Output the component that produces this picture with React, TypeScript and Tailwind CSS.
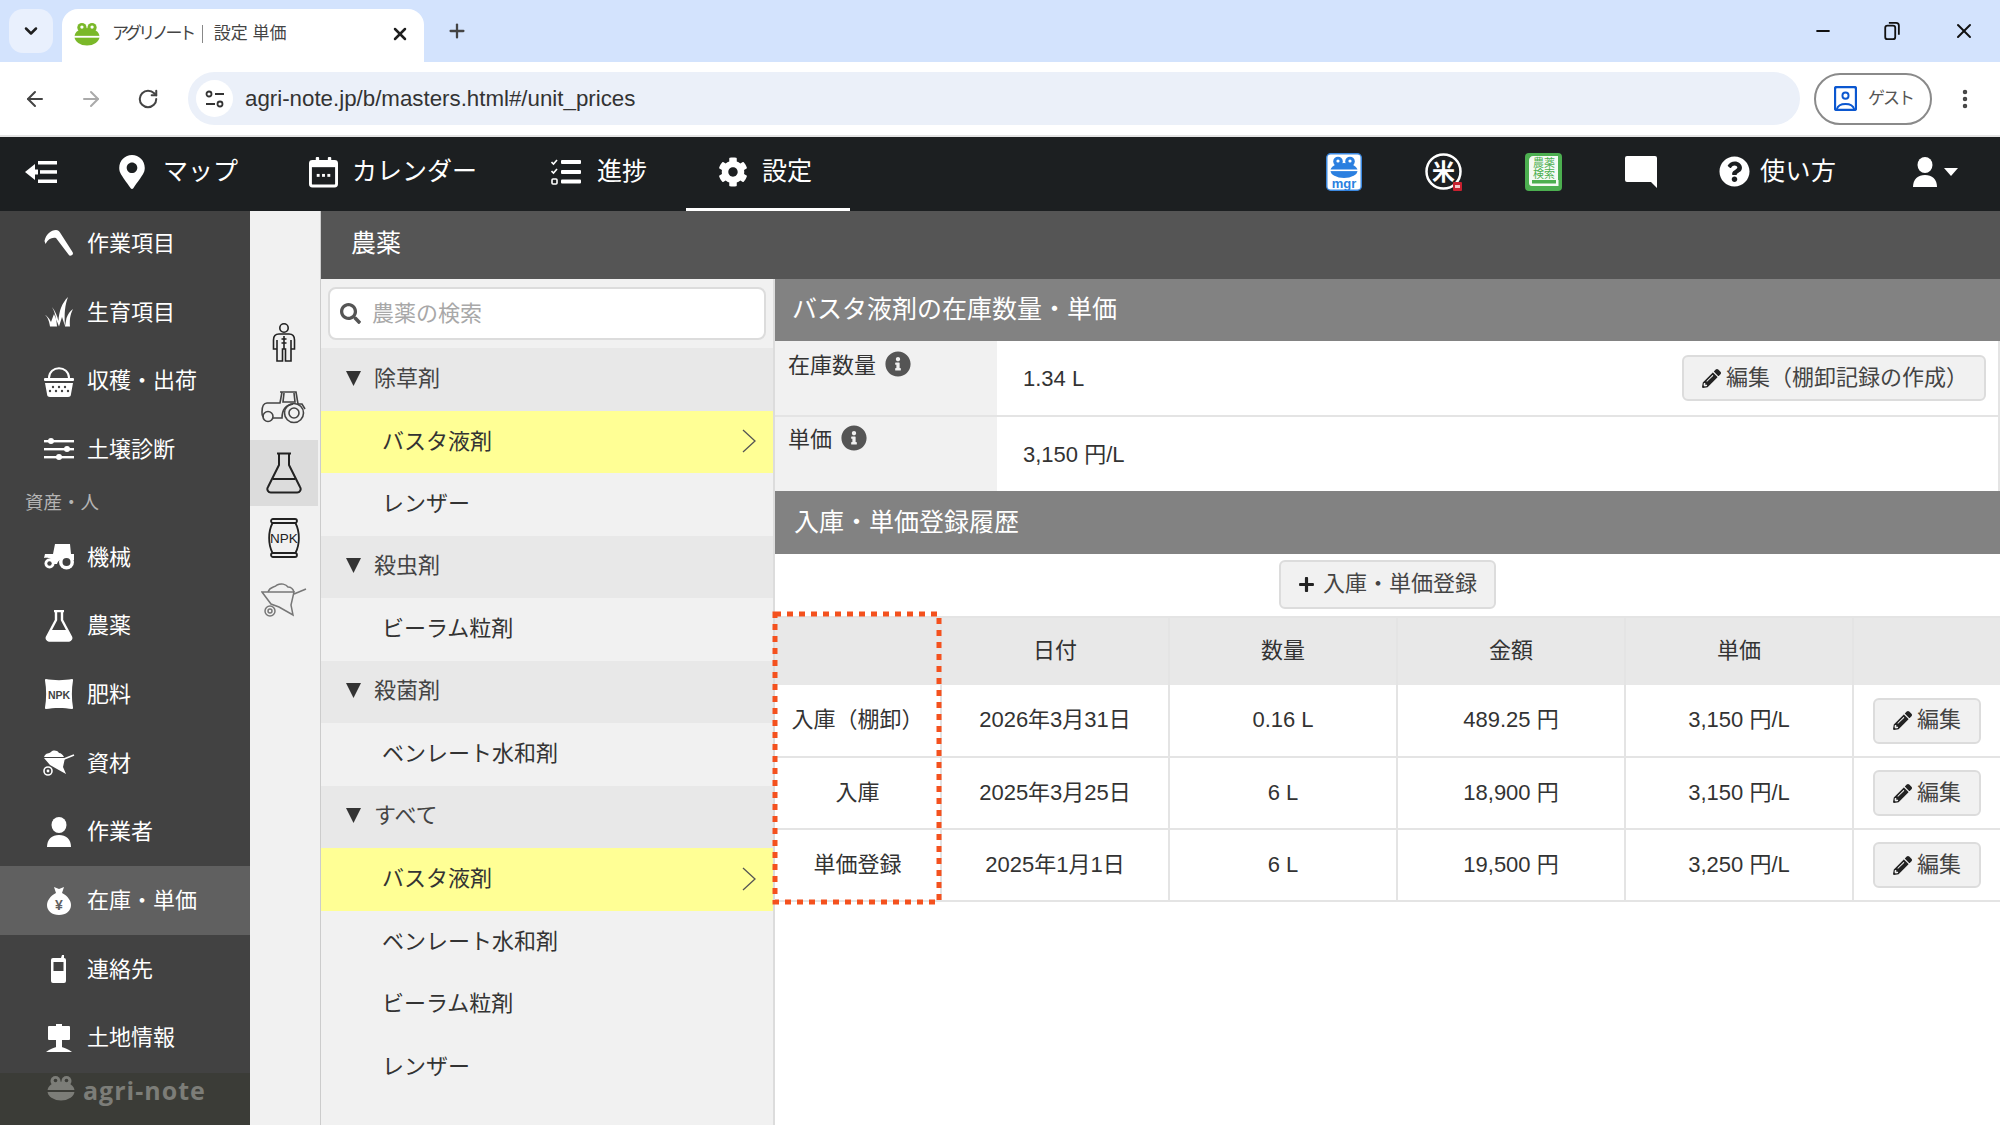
import React from 'react';
import { ArrowLeft, ArrowRight, RotateCw, X, Plus, ChevronDown, Minus, MoreVertical } from 'lucide-react';
import { FaMapMarkerAlt, FaCog, FaQuestionCircle, FaSearch, FaPencilAlt, FaPlus, FaInfoCircle } from 'react-icons/fa';

const FONT = '"Liberation Sans", "Noto Sans CJK JP", sans-serif';

type IconProps = { className?: string };

const Frog: React.FC<IconProps & { fill?: string; band?: string }> = ({ className, fill = '#7ab829', band = '#fff' }) => (
  <svg viewBox="0 0 28 26" className={className}>
    <circle cx="8.5" cy="6" r="5" fill={fill} />
    <circle cx="19.5" cy="6" r="5" fill={fill} />
    <ellipse cx="14" cy="16" rx="13.5" ry="9.5" fill={fill} />
    <rect x="0" y="15" width="28" height="2" fill={band} />
    <circle cx="8.5" cy="5.5" r="1.8" fill={band} />
    <circle cx="19.5" cy="5.5" r="1.8" fill={band} />
  </svg>
);

const CollapseIcon: React.FC<IconProps> = ({ className }) => (
  <svg viewBox="0 0 32 24" className={className} fill="#fff">
    <path d="M0 12 L10 4 V9.500 H13 V14.500 H10 V20 Z" />
    <rect x="13" y="1" width="19" height="3.500" />
    <rect x="15" y="10.200" width="17" height="3.500" />
    <rect x="13" y="19.500" width="19" height="3.500" />
  </svg>
);

const CalendarIcon: React.FC<IconProps> = ({ className }) => (
  <svg viewBox="0 0 30 32" className={className}>
    <rect x="1.5" y="5" width="27" height="25.5" rx="2" fill="none" stroke="#fff" strokeWidth="3" />
    <rect x="1.5" y="5" width="27" height="6" fill="#fff" />
    <rect x="7" y="0.5" width="3.5" height="7" rx="1" fill="#fff" />
    <rect x="19.5" y="0.5" width="3.5" height="7" rx="1" fill="#fff" />
    <rect x="8" y="18" width="3" height="3" fill="#fff" />
    <rect x="13.5" y="18" width="3" height="3" fill="#fff" />
    <rect x="19" y="18" width="3" height="3" fill="#fff" />
  </svg>
);

const TasksIcon: React.FC<IconProps> = ({ className }) => (
  <svg viewBox="0 0 30 26" className={className} fill="#fff">
    <path d="M0.5 3 L2.5 5 L6 1" fill="none" stroke="#fff" strokeWidth="1.6" />
    <path d="M0.5 12 L2.5 14 L6 10" fill="none" stroke="#fff" strokeWidth="1.6" />
    <rect x="1" y="20" width="5" height="5" rx="1" fill="none" stroke="#fff" strokeWidth="1.6" />
    <rect x="10" y="1" width="20" height="4" rx="1" />
    <rect x="10" y="11" width="20" height="4" rx="1" />
    <rect x="10" y="20.5" width="20" height="4" rx="1" />
  </svg>
);

const MgrIcon: React.FC<IconProps> = ({ className }) => (
  <svg viewBox="0 0 36 38" className={className}>
    <rect x="0.75" y="0.75" width="34.500" height="36.500" rx="4" fill="#fff" stroke="#3b88e0" strokeWidth="1.500" />
    <circle cx="12" cy="8.500" r="4.8" fill="#2a7fe0" />
    <circle cx="24" cy="8.500" r="4.8" fill="#2a7fe0" />
    <circle cx="12" cy="8" r="1.6" fill="#fff" />
    <circle cx="24" cy="8" r="1.6" fill="#fff" />
    <ellipse cx="18" cy="17.500" rx="13.500" ry="7.5" fill="#2a7fe0" />
    <rect x="4" y="16.500" width="28" height="1.6" fill="#fff" />
    <text x="18" y="35" textAnchor="middle" fontSize="13" fontWeight="700" fill="#2a7fe0" fontFamily="Liberation Sans">mgr</text>
  </svg>
);

const RiceIcon: React.FC<IconProps> = ({ className }) => (
  <svg viewBox="0 0 38 38" className={className}>
    <circle cx="18.5" cy="18.500" r="17" fill="#1c1f21" stroke="#fff" strokeWidth="2.500" />
    <text x="18.5" y="26.500" textAnchor="middle" fontSize="23" fontWeight="700" fill="#fff" fontFamily="Noto Sans CJK JP">米</text>
    <rect x="28" y="29" width="9" height="9" rx="1" fill="#c8202f" />
    <rect x="30" y="32" width="5" height="3" fill="#f3c4c8" />
  </svg>
);

const BookIcon: React.FC<IconProps> = ({ className }) => (
  <svg viewBox="0 0 37 38" className={className}>
    <rect x="0" y="0" width="37" height="38" rx="4" fill="#4caf50" />
    <path d="M8 3 H33 V27 H33.500 V33 H7 C5 33 4 32 4 30 V7 C4 5 6 3 8 3 Z" fill="#f4faf4" />
    <rect x="7" y="27" width="24" height="3.500" fill="#4caf50" />
    <text x="19" y="14" textAnchor="middle" fontSize="11" fill="#4caf50" fontFamily="Noto Sans CJK JP">農薬</text>
    <text x="19" y="25" textAnchor="middle" fontSize="11" fill="#4caf50" fontFamily="Noto Sans CJK JP">検索</text>
  </svg>
);

const ChatIcon: React.FC<IconProps> = ({ className }) => (
  <svg viewBox="0 0 32 32" className={className}>
    <path d="M2 0 H30 a2 2 0 0 1 2 2 V32 L26 26 H2 a2 2 0 0 1 -2 -2 V2 a2 2 0 0 1 2 -2 Z" fill="#fff" />
  </svg>
);

const PersonIcon: React.FC<IconProps> = ({ className }) => (
  <svg viewBox="0 0 24 30" className={className} fill="#fff">
    <ellipse cx="12" cy="8" rx="7.5" ry="8" />
    <path d="M0 30 C0 22 5 18 12 18 C19 18 24 22 24 30 Z" />
  </svg>
);

const SickleIcon: React.FC<IconProps> = ({ className }) => (
  <svg viewBox="0 0 30 28" className={className} fill="#fff">
    <path d="M0.500 12 C2 5 7 1 12 1 C14 1 15 2 16 3.500 L28.500 23 a2.200 2.200 0 0 1 -4 2.500 L12 9 C8 8 4 10 1.500 15 Z" />
  </svg>
);

const GrassIcon: React.FC<IconProps> = ({ className }) => (
  <svg viewBox="0 0 30 30" className={className} fill="#fff">
    <path d="M0 17 C3 19 5 23 6 29.500 H13 C12.500 22 11 15 8 10 C11 14 13 18 14.500 24 C15 14 18 6 24 0 C21 8 20 16 21 29.500 H26 C25.500 23 26 18 29 12 C26 14 24 17 22.500 21 L21 29 L18 20 L15 29.500 L10 17 L7 25 C5 21 3 19 0 17 Z" />
  </svg>
);

const BasketIcon: React.FC<IconProps> = ({ className }) => (
  <svg viewBox="0 0 30 32" className={className} fill="#fff">
    <path d="M5 13 C5 0 25 0 25 13" fill="none" stroke="#fff" strokeWidth="2" />
    <rect x="0" y="13" width="30" height="3" rx="1" />
    <path d="M1 18 H29 L27 29 a3 3 0 0 1 -3 3 H6 a3 3 0 0 1 -3 -3 Z" />
    <g fill="#424242">
      <circle cx="9" cy="22" r="1.2" /><circle cx="15" cy="22" r="1.2" /><circle cx="21" cy="22" r="1.2" />
      <circle cx="12" cy="26" r="1.2" /><circle cx="18" cy="26" r="1.2" /><circle cx="24" cy="26" r="1.2" /><circle cx="6" cy="26" r="1.2" />
    </g>
  </svg>
);

const SlidersIcon: React.FC<IconProps> = ({ className }) => (
  <svg viewBox="0 0 30 24" className={className} fill="#fff">
    <rect x="0" y="3" width="30" height="2.4" />
    <rect x="0" y="11" width="30" height="2.4" />
    <rect x="0" y="19" width="30" height="2.4" />
    <circle cx="7" cy="4" r="3" />
    <circle cx="23" cy="12" r="3" />
    <circle cx="15" cy="20" r="3" />
  </svg>
);

const TractorSolid: React.FC<IconProps> = ({ className }) => (
  <svg viewBox="0 0 32 26" className={className} fill="#fff">
    <path d="M12 0 H27 L28 10 H31 V16 H23 C19 14 15 16 14 20 H10 C10 16 7 13 1 14 L2 10 H10 Z" />
    <circle cx="6.5" cy="19.5" r="5" fill="#fff" />
    <circle cx="6.5" cy="19.5" r="2.2" fill="#424242" />
    <circle cx="23.5" cy="18" r="7.5" fill="#fff" />
    <circle cx="23.5" cy="18" r="4" fill="#424242" />
  </svg>
);

const FlaskSolid: React.FC<IconProps> = ({ className }) => (
  <svg viewBox="0 0 28 32" className={className}>
    <path d="M9 1 H19 M11 1 V10 L2 27 a2.5 2.5 0 0 0 2 3.5 H24 a2.5 2.5 0 0 0 2 -3.5 L17 10 V1" fill="none" stroke="#fff" strokeWidth="2.4" strokeLinejoin="round" />
    <path d="M6 20 H22 L26 28 a2 2 0 0 1 -2 3 H4 a2 2 0 0 1 -2 -3 Z" fill="#fff" />
  </svg>
);

const BagSolid: React.FC<IconProps> = ({ className }) => (
  <svg viewBox="0 0 28 32" className={className}>
    <path d="M1 1 C8 2.500 20 2.500 27 1 a1 1 0 0 1 1 1.500 C26.500 11 26.500 21 28 29.500 a1 1 0 0 1 -1 1.500 C20 29.500 8 29.500 1 31 a1 1 0 0 1 -1 -1.500 C1.500 21 1.500 11 0 2.500 a1 1 0 0 1 1 -1.500 Z" fill="#fff" />
    <text x="14" y="20.5" textAnchor="middle" fontSize="10.5" fontWeight="700" fill="#424242" fontFamily="Liberation Sans">NPK</text>
  </svg>
);

const BarrowSolid: React.FC<IconProps> = ({ className }) => (
  <svg viewBox="0 0 32 26" className={className} fill="#fff">
    <path d="M1 7 C3 2 6 4 8 2 C10 0 14 0 16 3 C18 3 20 5 21 7 Z" />
    <path d="M1 8 H22 L20 17 L23 24 L14 19 L7 15 Z" />
    <path d="M21 9 L31 5" stroke="#fff" strokeWidth="1.6" />
    <circle cx="5" cy="21" r="4" fill="none" stroke="#fff" strokeWidth="1.6" />
    <circle cx="5" cy="21" r="1.4" />
  </svg>
);

const MoneyBag: React.FC<IconProps> = ({ className }) => (
  <svg viewBox="0 0 24 28" className={className}>
    <path d="M7 0 L12 2 L17 0 L15 6 C21 9 24 14 24 18 C24 24 19 28 12 28 C5 28 0 24 0 18 C0 14 3 9 9 6 Z" fill="#fff" />
    <text x="12" y="23" textAnchor="middle" fontSize="14" fontWeight="700" fill="#606060" fontFamily="Liberation Sans">¥</text>
  </svg>
);

const PhoneIcon: React.FC<IconProps> = ({ className }) => (
  <svg viewBox="0 0 15 28" className={className}>
    <path d="M2 3 H10 L11 0 H13 V3 a2 2 0 0 1 2 2 V26 a2 2 0 0 1 -2 2 H2 a2 2 0 0 1 -2 -2 V5 a2 2 0 0 1 2 -2 Z" fill="#fff" />
    <rect x="2.5" y="7" width="10" height="9" fill="#424242" />
  </svg>
);

const SignIcon: React.FC<IconProps> = ({ className }) => (
  <svg viewBox="0 0 26 28" className={className} fill="#fff">
    <rect x="2" y="2" width="22" height="14" rx="1" />
    <rect x="10" y="0" width="6" height="24" />
    <path d="M0 28 C4 25 8 23 13 23 C18 23 22 25 26 28 Z" />
  </svg>
);

const PersonOutline: React.FC<IconProps> = ({ className }) => (
  <svg viewBox="0 0 24 40" className={className} fill="none" stroke="#222" strokeWidth="1.6">
    <circle cx="12" cy="5" r="4.2" />
    <path d="M7 11 H17 C20 11 22.500 13 22.500 17 V26 H19 V17 V38 H13.500 V26 H10.500 V38 H5 V17 V26 H1.500 V17 C1.500 13 4 11 7 11 Z" />
    <path d="M12 13 V26 M9.500 16 H14.500 M9.500 20 H14.500" />
  </svg>
);

const TractorOutline: React.FC<IconProps> = ({ className }) => (
  <svg viewBox="0 0 46 34" className={className} fill="none" stroke="#444" strokeWidth="1.6">
    <path d="M19 2 H35 L37 14 H41 L44 19" />
    <path d="M21 2 L19 13 H6 C3 13 1 16 1 22 C1 26 2 27 3 27" />
    <path d="M12 28 H21 C21 20 25 15 32 14" />
    <path d="M23 3 L22 12 H34 L33 3" />
    <circle cx="7" cy="26.500" r="5" />
    <circle cx="33" cy="23" r="9.500" />
    <circle cx="33" cy="23" r="5" />
  </svg>
);

const FlaskOutline: React.FC<IconProps> = ({ className }) => (
  <svg viewBox="0 0 36 42" className={className} fill="none" stroke="#222" strokeWidth="2">
    <path d="M11 1.500 H25 M13 2 V13 L2 35 a3.500 3.500 0 0 0 3 5.500 H31 a3.500 3.500 0 0 0 3 -5.500 L23 13 V2" strokeLinejoin="round" />
    <path d="M7 27 H29" />
  </svg>
);

const BagOutline: React.FC<IconProps> = ({ className }) => (
  <svg viewBox="0 0 34 40" className={className} fill="none" stroke="#222" strokeWidth="1.8">
    <rect x="4" y="1" width="26" height="4" rx="2" />
    <rect x="4" y="35" width="26" height="4" rx="2" />
    <path d="M5.500 5 C1 14 1 26 5.500 35 M28.500 5 C33 14 33 26 28.500 35" />
    <text x="17" y="25" textAnchor="middle" fontSize="13.500" fill="#222" stroke="none" fontFamily="Liberation Sans">NPK</text>
  </svg>
);

const BarrowOutline: React.FC<IconProps> = ({ className }) => (
  <svg viewBox="0 0 46 34" className={className} fill="none" stroke="#777" strokeWidth="1.5">
    <path d="M1 9 H33 L30 22 L32 32 L18 24 L10 21 Z" />
    <path d="M7 9 C9 3 13 5 16 2 C20 0 25 1 27 4 C30 4 32 6 33 9" />
    <path d="M33 11 L45 6" />
    <circle cx="9" cy="28" r="5" />
    <circle cx="9" cy="28" r="2" />
  </svg>
);

const sideItems: { label: string; icon: React.ReactNode; active?: boolean }[] = [
  { label: '作業項目', icon: <SickleIcon className="w-[30px] h-[28px]" /> },
  { label: '生育項目', icon: <GrassIcon className="w-[30px] h-[30px]" /> },
  { label: '収穫・出荷', icon: <BasketIcon className="w-[30px] h-[32px]" /> },
  { label: '土壌診断', icon: <SlidersIcon className="w-[30px] h-[24px]" /> },
];

const sideItems2: { label: string; icon: React.ReactNode; active?: boolean }[] = [
  { label: '機械', icon: <TractorSolid className="w-[32px] h-[26px]" /> },
  { label: '農薬', icon: <FlaskSolid className="w-[28px] h-[32px]" /> },
  { label: '肥料', icon: <BagSolid className="w-[28px] h-[32px]" /> },
  { label: '資材', icon: <BarrowSolid className="w-[32px] h-[26px]" /> },
  { label: '作業者', icon: <PersonIcon className="w-[24px] h-[30px]" /> },
  { label: '在庫・単価', icon: <MoneyBag className="w-[24px] h-[28px]" />, active: true },
  { label: '連絡先', icon: <PhoneIcon className="w-[15px] h-[28px]" /> },
  { label: '土地情報', icon: <SignIcon className="w-[26px] h-[28px]" /> },
];

const SideRow: React.FC<{ label: string; icon: React.ReactNode; active?: boolean }> = ({ label, icon, active }) => (
  <div className={`h-[68.7px] flex items-center text-white text-[22px] ${active ? 'bg-[#606060]' : ''}`}>
    <div className="w-[87px] pl-[30px] flex justify-center shrink-0">{icon}</div>
    <span>{label}</span>
  </div>
);

type ListRow = { label: string; kind: 'group' | 'item' | 'selected' };

const listRows: ListRow[] = [
  { label: '除草剤', kind: 'group' },
  { label: 'バスタ液剤', kind: 'selected' },
  { label: 'レンザー', kind: 'item' },
  { label: '殺虫剤', kind: 'group' },
  { label: 'ビーラム粒剤', kind: 'item' },
  { label: '殺菌剤', kind: 'group' },
  { label: 'ベンレート水和剤', kind: 'item' },
  { label: 'すべて', kind: 'group' },
  { label: 'バスタ液剤', kind: 'selected' },
  { label: 'ベンレート水和剤', kind: 'item' },
  { label: 'ビーラム粒剤', kind: 'item' },
  { label: 'レンザー', kind: 'item' },
];

const tableRows = [
  { type: '入庫（棚卸）', date: '2026年3月31日', qty: '0.16 L', amount: '489.25 円', price: '3,150 円/L' },
  { type: '入庫', date: '2025年3月25日', qty: '6 L', amount: '18,900 円', price: '3,150 円/L' },
  { type: '単価登録', date: '2025年1月1日', qty: '6 L', amount: '19,500 円', price: '3,250 円/L' },
];

const EditButton: React.FC<{ label: string; className: string }> = ({ label, className }) => (
  <button className={`flex items-center bg-[#f1f1f1] border-2 border-[#dcdcdc] rounded-[6px] text-[#444] text-[22px] ${className}`}>
    <FaPencilAlt className="w-[19px] h-[19px] text-[#222] mr-[5px]" />
    <span className="pb-[2px]">{label}</span>
  </button>
);

const App: React.FC = () => {
  return (
    <div className="w-[2000px] h-[1125px] flex flex-col overflow-hidden bg-white" style={{ fontFamily: FONT }}>
      {/* Tab strip */}
      <div className="h-[62px] bg-[#d3e3fd] flex items-end shrink-0 relative">
        <div className="w-[44px] h-[44px] ml-[9px] mb-[9px] bg-[#e9f0fd] rounded-[14px] flex items-center justify-center">
          <ChevronDown className="w-[20px] h-[20px] text-[#1f1f1f]" strokeWidth={3} />
        </div>
        <div className="w-[362px] h-[53px] ml-[9px] bg-white rounded-t-[16px] flex items-center pl-[12px] pb-[4px]">
          <Frog className="w-[26px] h-[24px]" />
          <span className="ml-[12px] text-[17px] text-[#444] tracking-[-3.4px]">アグリノート</span>
          <span className="ml-[9px] w-px h-[18px] bg-[#888]" />
          <span className="ml-[11px] text-[17px] text-[#444]">設定 単価</span>
          <X className="w-[20px] h-[20px] ml-auto mr-[14px] text-[#1f1f1f]" strokeWidth={3} />
        </div>
        <Plus className="w-[22px] h-[22px] ml-[22px] mb-[20px] text-[#444]" strokeWidth={2.5} />
        <div className="ml-auto flex items-center gap-[51px] mr-[24px] mb-[19px] text-[#111]">
          <Minus className="w-[20px] h-[20px]" strokeWidth={2.5} />
          <svg viewBox="0 0 18 22" className="w-[17px] h-[20px]" fill="none" stroke="#111" strokeWidth="2">
            <rect x="1" y="5" width="11" height="15" rx="2.500" />
            <path d="M5 2 H13 a3 3 0 0 1 3 3 V15" />
          </svg>
          <X className="w-[24px] h-[24px]" strokeWidth={2} />
        </div>
      </div>

      {/* Toolbar */}
      <div className="h-[73px] flex items-center shrink-0 pl-[23px] rounded-t-[10px] bg-white">
        <ArrowLeft className="w-[24px] h-[24px] text-[#444]" strokeWidth={2} />
        <ArrowRight className="w-[24px] h-[24px] ml-[32px] text-[#aaa]" strokeWidth={2} />
        <RotateCw className="w-[22px] h-[22px] ml-[34px] text-[#444]" strokeWidth={2.2} />
        <div className="w-[1612px] h-[53px] ml-[29px] bg-[#ebf0f9] rounded-full flex items-center pl-[8px]">
          <div className="w-[37px] h-[37px] bg-white rounded-full flex items-center justify-center">
            <svg viewBox="0 0 20 18" className="w-[20px] h-[18px]" fill="none" stroke="#333" strokeWidth="1.800">
              <circle cx="4" cy="4" r="2.500" />
              <path d="M10 4 H19 M1 14 H10" />
              <circle cx="15" cy="14" r="2.500" />
            </svg>
          </div>
          <span className="ml-[12px] text-[22.300px] text-[#333]">agri-note.jp/b/masters.html#/unit_prices</span>
        </div>
        <div className="w-[118px] h-[52px] ml-[14px] border-2 border-[#8a8a8a] rounded-full flex items-center pl-[18px]">
          <svg viewBox="0 0 24 26" className="w-[23px] h-[25px]">
            <rect x="1" y="1" width="22" height="24" rx="2" fill="none" stroke="#0b57d0" strokeWidth="2.500" />
            <circle cx="12" cy="10" r="3.200" fill="none" stroke="#0b57d0" strokeWidth="2" />
            <path d="M3 24 C5 17 19 17 21 24" fill="none" stroke="#0b57d0" strokeWidth="2" />
          </svg>
          <span className="ml-[11px] text-[17px] text-[#555] tracking-[-2px]">ゲスト</span>
        </div>
        <MoreVertical className="w-[24px] h-[24px] ml-[21px] text-[#444]" strokeWidth={2.5} />
      </div>

      {/* App nav */}
      <div className="h-[76px] shrink-0 border-t-2 border-[#e4e4e4] bg-[#1c1f21] flex items-center text-white text-[25px] pl-[25px] pb-[5px]">
        <CollapseIcon className="w-[32px] h-[24px]" />
        <FaMapMarkerAlt className="w-[30px] h-[34px] ml-[60px]" />
        <span className="ml-[16px]">マップ</span>
        <CalendarIcon className="w-[29px] h-[32px] ml-[71px]" />
        <span className="ml-[14px]">カレンダー</span>
        <TasksIcon className="w-[30px] h-[26px] ml-[74px]" />
        <span className="ml-[16px]">進捗</span>
        <div className="relative h-[76px] mt-[1px] ml-[39px] w-[164px] flex items-center pl-[32px]">
          <FaCog className="w-[30px] h-[30px]" />
          <span className="ml-[14px]">設定</span>
          <div className="absolute left-0 right-0 bottom-[-1px] h-[3px] bg-white" />
        </div>
        <MgrIcon className="w-[36px] h-[38px] ml-[476px]" />
        <RiceIcon className="w-[38px] h-[38px] ml-[63px]" />
        <BookIcon className="w-[37px] h-[38px] ml-[62px]" />
        <ChatIcon className="w-[32px] h-[32px] ml-[63px]" />
        <FaQuestionCircle className="w-[31px] h-[31px] ml-[62px]" />
        <span className="ml-[10px] tracking-[0.5px]">使い方</span>
        <PersonIcon className="w-[24px] h-[30px] ml-[76px]" />
        <svg viewBox="0 0 14 8" className="w-[14px] h-[8px] ml-[7px]"><path d="M0 0 H14 L7 8 Z" fill="#fff" /></svg>
      </div>

      <div className="flex flex-1 min-h-0">
        {/* Sidebar */}
        <div className="w-[250px] shrink-0 bg-[#424242] flex flex-col relative">
          <div className="flex-1 -mt-[2px]">
            {sideItems.map(it => <SideRow key={it.label} {...it} />)}
            <div className="h-[39px] flex items-center pl-[25px] text-[18.500px] text-[#b4b4b4]">資産・人</div>
            {sideItems2.map(it => <SideRow key={it.label} {...it} />)}
          </div>
          <div className="h-[52px] shrink-0 bg-[#3b3c37] flex items-start pl-[47px] pt-[2px]">
            <Frog className="w-[28px] h-[26px]" fill="#7c7d78" band="#3b3c37" />
            <span className="ml-[8px] text-[25px] font-bold text-[#7c7d78] tracking-[1px] leading-[30px]" style={{ fontFamily: '"Open Sans", sans-serif' }}>agri-note</span>
          </div>
        </div>

        {/* Icon strip */}
        <div className="w-[71px] shrink-0 bg-[#f1f1f1] border-r border-[#cccccc] pr-[2px] flex flex-col items-stretch pt-[101px]">
          <div className="h-[62px] flex items-center justify-center"><PersonOutline className="w-[24px] h-[40px]" /></div>
          <div className="h-[66px] flex items-center justify-center"><TractorOutline className="w-[46px] h-[34px]" /></div>
          <div className="h-[66px] bg-[#dcdcdc] flex items-center justify-center"><FlaskOutline className="w-[36px] h-[42px]" /></div>
          <div className="h-[64px] flex items-center justify-center"><BagOutline className="w-[34px] h-[40px]" /></div>
          <div className="h-[60px] flex items-center justify-center"><BarrowOutline className="w-[46px] h-[34px]" /></div>
        </div>

        <div className="flex-1 flex flex-col min-w-0">
          <div className="h-[68px] shrink-0 bg-[#555555] flex items-center pl-[30px] pb-[2px] text-white text-[25px]">農薬</div>
          <div className="flex flex-1 min-h-0">
            {/* Chemical list */}
            <div className="w-[454px] shrink-0 bg-[#f1f1f1] border-r-2 border-[#dcdcdc]">
              <div className="h-[69px] px-[7px] pt-[8px]">
                <div className="h-[53px] w-[438px] bg-white border-2 border-[#dcdcdc] rounded-[8px] flex items-center pl-[10px] pb-[1px]">
                  <FaSearch className="w-[21px] h-[21px] text-[#555]" />
                  <span className="ml-[11px] text-[22px] text-[#a8a8a8]">農薬の検索</span>
                </div>
              </div>
              {listRows.map((row, i) => {
                if (row.kind === 'group') {
                  return (
                    <div key={i} className="h-[62.500px] bg-[#e8e8e8] flex items-center pl-[25px] pb-[2px] text-[22px] text-[#444]">
                      <svg viewBox="0 0 15 15" className="w-[15px] h-[15px] mr-[13px]"><path d="M0 0 H15 L7.500 15 Z" fill="#333" /></svg>
                      {row.label}
                    </div>
                  );
                }
                return (
                  <div key={i} className={`h-[62.500px] flex items-center pl-[61px] pr-[17px] pb-[1px] text-[22px] text-[#333] ${row.kind === 'selected' ? 'bg-[#ffff95]' : ''}`}>
                    {row.label}
                    {row.kind === 'selected' && (
                      <svg viewBox="0 0 14 24" className="w-[14px] h-[24px] ml-auto" fill="none" stroke="#555" strokeWidth="1.300"><path d="M1 1 L13 12 L1 23" /></svg>
                    )}
                  </div>
                );
              })}
            </div>

            {/* Detail */}
            <div className="flex-1 min-w-0 relative">
              <div className="h-[62px] bg-[#828282] flex items-center pl-[17px] text-white text-[25px]">バスタ液剤の在庫数量・単価</div>
              <div className="border-r-2 border-[#e4e4e4]">
                <div className="h-[76px] flex border-b-2 border-[#e4e4e4]">
                  <div className="w-[222px] bg-[#f1f1f1] flex items-start pl-[13px] pt-[8px] text-[22px] text-[#333]">
                    在庫数量
                    <FaInfoCircle className="w-[26px] h-[26px] ml-[9px] mt-[2px] text-[#555]" />
                  </div>
                  <div className="flex-1 flex items-center pl-[26px] text-[22px] text-[#333]">
                    1.34 L
                    <EditButton label="編集（棚卸記録の作成）" className="ml-auto mr-[12px] w-[304px] h-[46px] pl-[18px]" />
                  </div>
                </div>
                <div className="h-[74px] flex">
                  <div className="w-[222px] bg-[#f1f1f1] flex items-start pl-[13px] pt-[6px] text-[22px] text-[#333]">
                    単価
                    <FaInfoCircle className="w-[26px] h-[26px] ml-[9px] mt-[2px] text-[#555]" />
                  </div>
                  <div className="flex-1 flex items-center pl-[26px] text-[22px] text-[#333]">3,150 円/L</div>
                </div>
              </div>
              <div className="h-[63px] bg-[#828282] flex items-center pl-[19px] text-white text-[25px]">入庫・単価登録履歴</div>
              <div className="h-[62px] flex items-center justify-center pb-[2px]">
                <button className="w-[217px] h-[49px] bg-[#f1f1f1] border-2 border-[#dcdcdc] rounded-[6px] flex items-center justify-center text-[22px] text-[#444]">
                  <FaPlus className="w-[17px] h-[17px] text-[#222] mr-[8px]" />
                  <span className="pb-[2px]">入庫・単価登録</span>
                </button>
              </div>
              <table className="w-full border-collapse text-[22px] text-[#333] table-fixed">
                <colgroup>
                  <col className="w-[166px]" />
                  <col className="w-[228px]" />
                  <col className="w-[228px]" />
                  <col className="w-[228px]" />
                  <col className="w-[228px]" />
                  <col />
                </colgroup>
                <thead>
                  <tr className="h-[68px] bg-[#e8e8e8]">
                    {['', '日付', '数量', '金額', '単価', ''].map((h, i) => (
                      <th key={i} className="font-normal pb-[3px] border-x-2 border-t-2 border-[#e4e4e4] first:border-l-0 last:border-r-0">{h}</th>
                    ))}
                  </tr>
                </thead>
                <tbody>
                  {tableRows.map(row => (
                    <tr key={row.date} className="h-[72px] border-b-2 border-[#e4e4e4]">
                      <td className="text-center pb-[2px] border-r-2 border-[#e4e4e4] whitespace-nowrap">{row.type}</td>
                      <td className="text-center pb-[2px] border-r-2 border-[#e4e4e4]">{row.date}</td>
                      <td className="text-center pb-[2px] border-r-2 border-[#e4e4e4]">{row.qty}</td>
                      <td className="text-center pb-[2px] border-r-2 border-[#e4e4e4]">{row.amount}</td>
                      <td className="text-center pb-[2px] border-r-2 border-[#e4e4e4]">{row.price}</td>
                      <td>
                        <div className="flex justify-center">
                          <EditButton label="編集" className="w-[108px] h-[46px] justify-center" />
                        </div>
                      </td>
                    </tr>
                  ))}
                </tbody>
              </table>

              {/* red annotation around the first column */}
              <svg className="absolute left-[-3px] top-[332px] w-[170px] h-[294px] pointer-events-none" viewBox="0 0 170 294" fill="none">
                <rect x="3" y="3" width="164" height="288" stroke="#f4511e" strokeWidth="5" strokeDasharray="6 6" />
              </svg>
            </div>
          </div>
        </div>
      </div>
    </div>
  );
};

export default App;
